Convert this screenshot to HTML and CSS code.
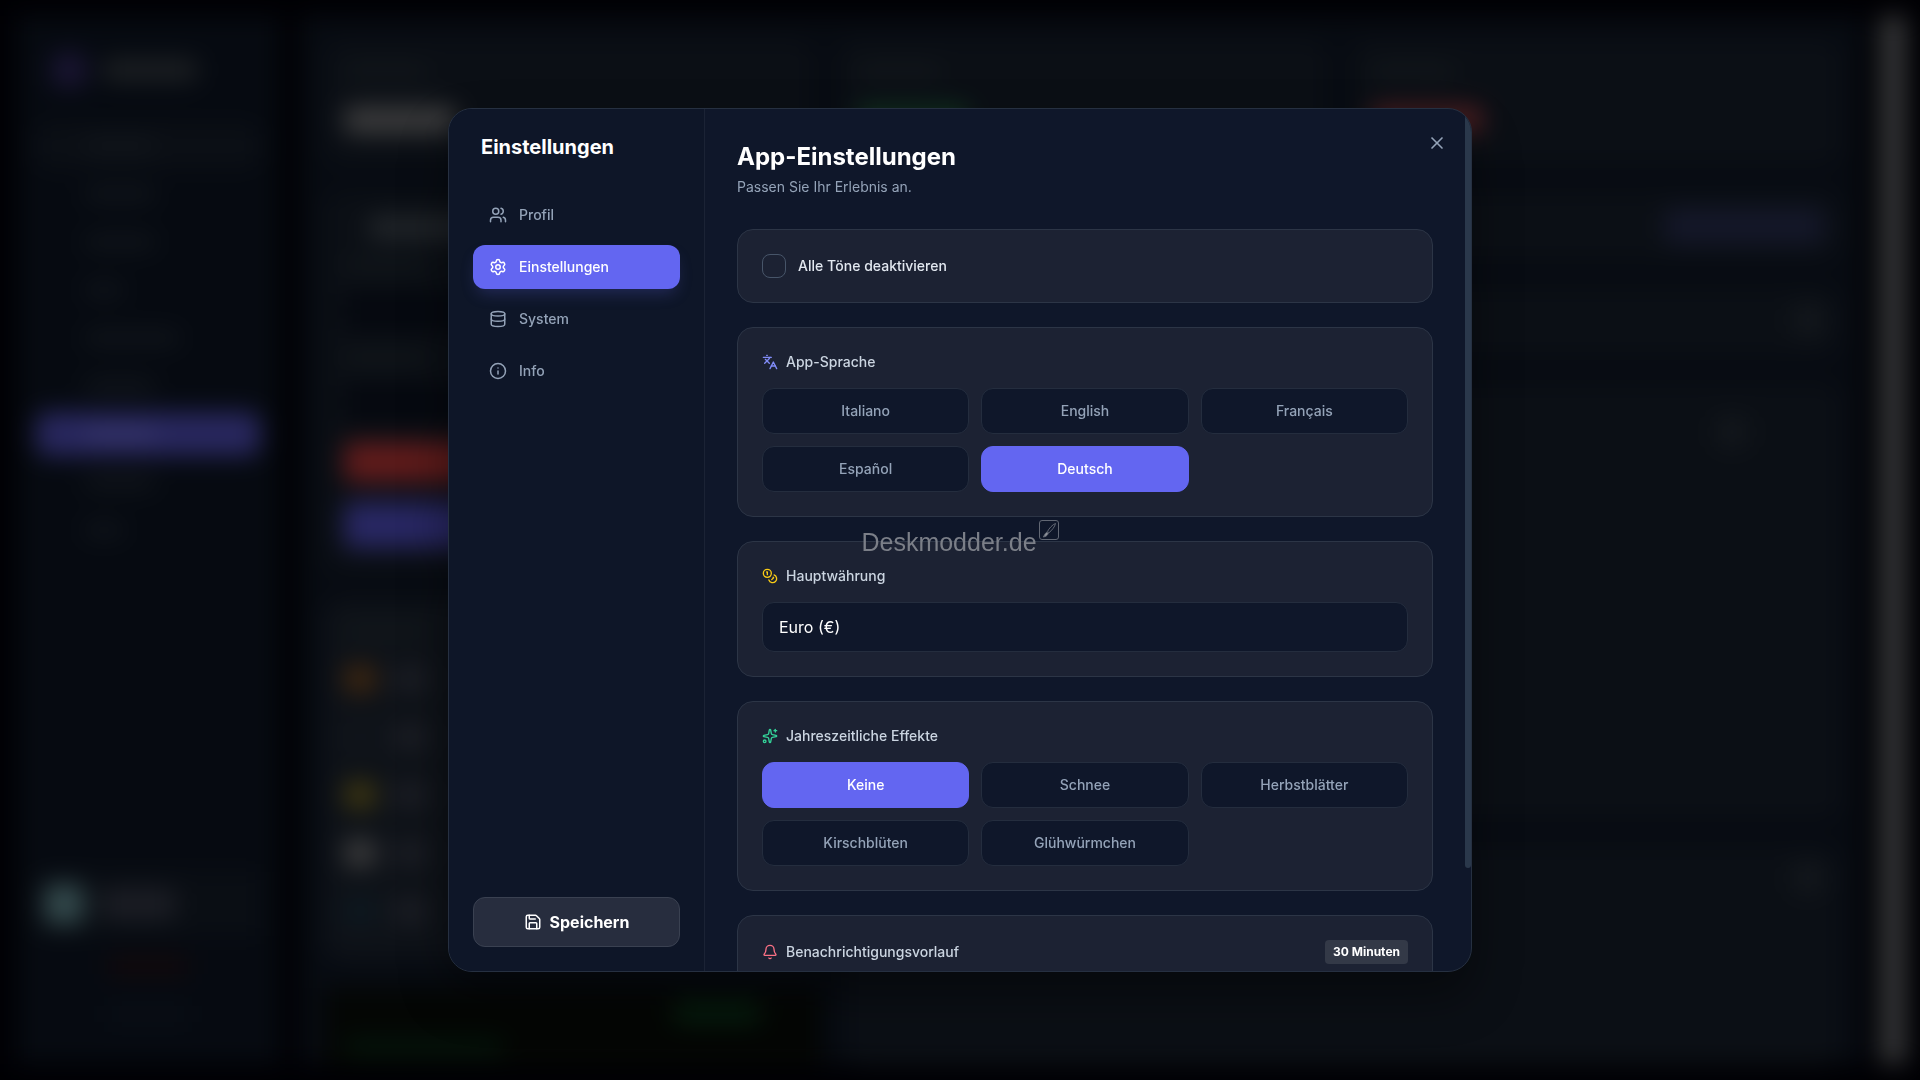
FILE: index.html
```html
<!DOCTYPE html>
<html lang="de">
<head>
    <meta charset="UTF-8">
    <meta name="viewport" content="width=device-width, initial-scale=1.0">
    <title>Einstellungen</title>
    <link rel="stylesheet" href="styles.css">
</head>
<body>
    <!-- Dashboard behind the dialog -->
    <div class="backdrop" aria-hidden="true">
        <div class="side">
            <div class="side-logo"><i class="logo-mark"></i><i class="logo-name"></i></div>
            <div class="side-item boxed"><i></i></div>
            <div class="side-item"><i></i></div>
            <div class="side-item"><i></i></div>
            <div class="side-item short"><i></i></div>
            <div class="side-item long"><i></i></div>
            <div class="side-item"><i></i></div>
            <div class="side-item active"><i></i></div>
            <div class="side-item"><i></i></div>
            <div class="side-item short"><i></i></div>
            <div class="side-user"><i class="avatar"></i><i class="user-name"></i></div>
            <div class="side-link red"></div>
            <div class="side-link"></div>
        </div>
        <div class="board">
            <div class="stats">
                <div class="panel"><i class="line"></i><i class="value"></i></div>
                <div class="panel"><i class="line"></i><i class="value green"></i></div>
                <div class="panel"><i class="line"></i><i class="value red"></i></div>
            </div>
            <div class="columns">
                <div class="column-left">
                    <div class="panel form">
                        <i class="form-title"></i>
                        <i class="line"></i>
                        <i class="field"></i>
                        <i class="line"></i>
                        <i class="field"></i>
                        <i class="action red"></i>
                        <i class="action"></i>
                    </div>
                    <div class="panel coins">
                        <i class="line"></i>
                        <div class="coin orange"><i></i><b></b></div>
                        <div class="coin"><i></i><b></b></div>
                        <div class="coin yellow"><i></i><b></b></div>
                        <div class="coin white"><i></i><b></b></div>
                        <div class="coin blue"><i></i><b></b></div>
                    </div>
                    <div class="terminal"><i></i><b></b></div>
                </div>
                <div class="column-right">
                    <div class="panel strip"><i class="pill"></i></div>
                    <div class="panel strip"><i class="dot"></i></div>
                    <div class="panel chart"><i class="dot"></i></div>
                    <div class="panel rest"><i class="dot"></i></div>
                </div>
            </div>
        </div>
        <div class="page-scroll"></div>
    </div>

    <main class="overlay">
        <div class="modal" role="dialog" aria-labelledby="dialog-title">
            <aside class="sidebar">
                <h2 class="sidebar-title" id="dialog-title">Einstellungen</h2>
                <nav class="menu">
                    <button class="menu-item" type="button">
                        <svg class="icon" viewBox="0 0 24 24"><path d="M16 21v-2a4 4 0 0 0-4-4H6a4 4 0 0 0-4 4v2"/><circle cx="9" cy="7" r="4"/><path d="M22 21v-2a4 4 0 0 0-3-3.87"/><path d="M16 3.13a4 4 0 0 1 0 7.75"/></svg>
                        Profil
                    </button>
                    <button class="menu-item active" type="button">
                        <svg class="icon" viewBox="0 0 24 24"><path d="M9.671 4.136a2.34 2.34 0 0 1 4.659 0 2.34 2.34 0 0 0 3.319 1.915 2.34 2.34 0 0 1 2.33 4.033 2.34 2.34 0 0 0 0 3.831 2.34 2.34 0 0 1-2.33 4.033 2.34 2.34 0 0 0-3.319 1.915 2.34 2.34 0 0 1-4.659 0 2.34 2.34 0 0 0-3.32-1.915 2.34 2.34 0 0 1-2.33-4.033 2.34 2.34 0 0 0 0-3.831A2.34 2.34 0 0 1 6.35 6.051a2.34 2.34 0 0 0 3.319-1.915"/><circle cx="12" cy="12" r="3"/></svg>
                        Einstellungen
                    </button>
                    <button class="menu-item" type="button">
                        <svg class="icon" viewBox="0 0 24 24"><ellipse cx="12" cy="5" rx="9" ry="3"/><path d="M3 5v14a9 3 0 0 0 18 0V5"/><path d="M3 12a9 3 0 0 0 18 0"/></svg>
                        System
                    </button>
                    <button class="menu-item" type="button">
                        <svg class="icon" viewBox="0 0 24 24"><circle cx="12" cy="12" r="10"/><path d="M12 16v-4"/><path d="M12 8h.01"/></svg>
                        Info
                    </button>
                </nav>
                <button class="save" type="button">
                    <svg class="icon" viewBox="0 0 24 24"><path d="M15.2 3a2 2 0 0 1 1.4.6l3.8 3.8a2 2 0 0 1 .6 1.4V19a2 2 0 0 1-2 2H5a2 2 0 0 1-2-2V5a2 2 0 0 1 2-2z"/><path d="M17 21v-7a1 1 0 0 0-1-1H8a1 1 0 0 0-1 1v7"/><path d="M7 3v4a1 1 0 0 0 1 1h7"/></svg>
                    Speichern
                </button>
            </aside>

            <div class="content">
                <header class="content-header">
                    <h1>App-Einstellungen</h1>
                    <p>Passen Sie Ihr Erlebnis an.</p>
                </header>

                <section class="card">
                    <label class="check">
                        <input type="checkbox">
                        Alle Töne deaktivieren
                    </label>
                </section>

                <section class="card">
                    <h3 class="card-title">
                        <svg class="icon small indigo" viewBox="0 0 24 24"><path d="m5 8 6 6"/><path d="m4 14 6-6 2-3"/><path d="M2 5h12"/><path d="M7 2h1"/><path d="m22 22-5-10-5 10"/><path d="M14 18h6"/></svg>
                        App-Sprache
                    </h3>
                    <div class="options">
                        <button class="option" type="button">Italiano</button>
                        <button class="option" type="button">English</button>
                        <button class="option" type="button">Français</button>
                        <button class="option" type="button">Español</button>
                        <button class="option selected" type="button">Deutsch</button>
                    </div>
                </section>

                <section class="card">
                    <label class="card-title" for="currency">
                        <svg class="icon small yellow" viewBox="0 0 24 24"><circle cx="8" cy="8" r="6"/><path d="M18.09 10.37A6 6 0 1 1 10.34 18"/><path d="M7 6h1v4"/><path d="m16.71 13.88.7.71-2.82 2.82"/></svg>
                        Hauptwährung
                    </label>
                    <select class="select" id="currency">
                        <option>Euro (€)</option>
                    </select>
                </section>

                <section class="card">
                    <h3 class="card-title">
                        <svg class="icon small green" viewBox="0 0 24 24"><path d="M11.017 2.814a1 1 0 0 1 1.966 0l1.051 5.558a2 2 0 0 0 1.594 1.594l5.558 1.051a1 1 0 0 1 0 1.966l-5.558 1.051a2 2 0 0 0-1.594 1.594l-1.051 5.558a1 1 0 0 1-1.966 0l-1.051-5.558a2 2 0 0 0-1.594-1.594l-5.558-1.051a1 1 0 0 1 0-1.966l5.558-1.051a2 2 0 0 0 1.594-1.594z"/><path d="M20 2v4"/><path d="M22 4h-4"/><circle cx="4" cy="20" r="2"/></svg>
                        Jahreszeitliche Effekte
                    </h3>
                    <div class="options">
                        <button class="option selected" type="button">Keine</button>
                        <button class="option" type="button">Schnee</button>
                        <button class="option" type="button">Herbstblätter</button>
                        <button class="option" type="button">Kirschblüten</button>
                        <button class="option" type="button">Glühwürmchen</button>
                    </div>
                </section>

                <section class="card">
                    <div class="card-row">
                        <label class="card-title" for="lead">
                            <svg class="icon small rose" viewBox="0 0 24 24"><path d="M10.268 21a2 2 0 0 0 3.464 0"/><path d="M3.262 15.326A1 1 0 0 0 4 17h16a1 1 0 0 0 .74-1.673C19.41 13.956 18 12.499 18 8A6 6 0 0 0 6 8c0 4.499-1.411 5.956-2.738 7.326"/></svg>
                            Benachrichtigungsvorlauf
                        </label>
                        <span class="badge">30 Minuten</span>
                    </div>
                    <input class="slider" id="lead" type="range" min="0" max="120" value="30">
                </section>
            </div>
            <div class="scrollbar" aria-hidden="true"><div class="scrollbar-thumb"></div></div>

            <button class="close" type="button" aria-label="Schließen">
                <svg class="icon" viewBox="0 0 24 24"><path d="M18 6 6 18"/><path d="m6 6 12 12"/></svg>
            </button>
        </div>
    </main>

    <div class="watermark">
        <span>Deskmodder.de</span>
        <svg viewBox="0 0 20 20"><rect x=".5" y=".5" width="19" height="19" rx="2.5"/><path d="M16.5 3.5c-3 1-6.500 5-8 8l1.500 1.200c2.500-2 6-6 6.500-9.200z"/><path class="bristle" d="M7.800 12.200l1.500 1.200c-.8 2-2.500 3.200-5 3.600 1-1.500 1.500-3.600 3.500-4.800z"/></svg>
    </div>
</body>
</html>
```

FILE: styles.css
```css
* {
    box-sizing: border-box;
}
body {
    margin: 0;
    height: 100vh;
    overflow: hidden;
    background: #000104;
    color: #fff;
    font-family: Inter, "Liberation Sans", sans-serif;
    font-size: 14px;
    line-height: 20px;
}
h1, h2, h3, p {
    margin: 0;
}
button, select, input {
    font: inherit;
    color: inherit;
    margin: 0;
}
button {
    cursor: pointer;
}

/* Dashboard behind the dialog */
.backdrop {
    position: fixed;
    inset: 0;
    display: flex;
    padding: 16px;
    filter: blur(12px);
}
.backdrop i, .backdrop b {
    display: block;
    border-radius: 8px;
}
.side {
    display: flex;
    flex-direction: column;
    width: 264px;
    padding: 32px 20px;
    background: #060a11;
}
.side-logo {
    display: flex;
    align-items: center;
    gap: 16px;
    height: 44px;
    margin: 0 0 32px 16px;
}
.logo-mark {
    width: 34px;
    height: 34px;
    background: #1a1533;
}
.logo-name {
    width: 96px;
    height: 22px;
    background: #1d2023;
}
.side-item {
    display: flex;
    align-items: center;
    height: 44px;
    margin-bottom: 4px;
    padding-left: 48px;
    border-radius: 12px;
}
.side-item i {
    width: 72px;
    height: 14px;
    background: #12161c;
}
.side-item.short i {
    width: 40px;
}
.side-item.long i {
    width: 96px;
}
.side-item.boxed {
    background: #0b0f15;
}
.side-item.active {
    background: #28275e;
}
.side-item.active i {
    background: #36356a;
}
.side-user {
    display: flex;
    align-items: center;
    gap: 16px;
    height: 64px;
    margin-top: auto;
    padding-left: 8px;
    background: #0a0e14;
}
.avatar {
    width: 40px;
    height: 40px;
    background: #33494c;
}
.user-name {
    width: 76px;
    height: 32px;
    background: #1b1d24;
}
.side-link {
    width: 80px;
    height: 20px;
    margin: 20px auto 8px;
    background: #090e15;
}
.side-link.red {
    background: #12090b;
}
.board {
    display: flex;
    flex: 1;
    flex-direction: column;
    gap: 28px;
    padding: 24px;
    margin-left: 20px;
    background: #070b12;
}
.stats {
    display: grid;
    grid-template-columns: repeat(3, 1fr);
    gap: 24px;
}
.panel {
    padding: 24px 20px;
    border-radius: 20px;
    background: #0b0f15;
}
.stats .panel {
    height: 124px;
}
.line {
    width: 84px;
    height: 14px;
    background: #12171b;
}
.value {
    width: 112px;
    height: 28px;
    margin-top: 28px;
    background: #3b3b3c;
}
.value.green {
    background: #10311f;
}
.value.red {
    background: #4a1d20;
}
.columns {
    display: grid;
    flex: 1;
    grid-template-columns: 1fr 2fr;
    gap: 24px;
}
.column-left, .column-right {
    display: flex;
    flex-direction: column;
    gap: 28px;
}
.form {
    display: flex;
    flex-direction: column;
    gap: 20px;
    height: 380px;
}
.form-title {
    width: 120px;
    height: 24px;
    margin-left: 24px;
    background: #22262a;
}
.field {
    height: 40px;
    background: #05080f;
}
.action {
    height: 48px;
    background: #282763;
}
.action.red {
    height: 42px;
    background: #601b1b;
}
.coins {
    display: flex;
    flex-direction: column;
    gap: 24px;
    height: 360px;
    background: #0e1218;
}
.coin {
    display: flex;
    align-items: center;
    gap: 16px;
    height: 34px;
}
.coin i {
    width: 32px;
    height: 28px;
    background: #10141b;
}
.coin b {
    width: 36px;
    height: 28px;
    background: #1b1d24;
}
.coin.orange i {
    background: #3d2610;
}
.coin.yellow i {
    background: #3c3511;
}
.coin.white i {
    background: #3b3b3c;
}
.coin.blue i {
    background: #0d1820;
}
.terminal {
    display: flex;
    flex: 1;
    flex-direction: column;
    gap: 16px;
    padding: 12px 20px;
    background: #040604;
}
.terminal i {
    align-self: flex-end;
    width: 88px;
    height: 24px;
    margin-right: 40px;
    background: #061c0d;
}
.terminal b {
    width: 160px;
    height: 14px;
    background: #05180c;
}
.column-right .panel {
    display: flex;
    justify-content: flex-end;
    padding: 16px;
}
.column-right .chart {
    padding: 32px 92px;
}
.strip {
    height: 68px;
}
.chart {
    flex: 1;
}
.rest {
    height: 220px;
}
.pill {
    width: 160px;
    height: 36px;
    background: #141729;
}
.dot {
    width: 32px;
    height: 32px;
    background: #13171c;
}
.page-scroll {
    width: 26px;
    margin: 0 -2px 0 16px;
    background: #353638;
}

/* Settings dialog */
.overlay {
    position: relative;
    display: flex;
    align-items: center;
    justify-content: center;
    height: 100vh;
    padding: 16px;
}
.modal {
    position: relative;
    display: flex;
    width: 100%;
    max-width: 1024px;
    height: 80vh;
    overflow: hidden;
    border: 1px solid #263041;
    border-radius: 24px;
    background: #0f172a;
    box-shadow: 0 24px 48px rgba(0, 0, 0, 0.4);
}
.icon {
    flex: none;
    width: 18px;
    height: 18px;
    fill: none;
    stroke: currentColor;
    stroke-width: 2;
    stroke-linecap: round;
    stroke-linejoin: round;
}
.icon.small {
    width: 16px;
    height: 16px;
}
.indigo {
    color: #818cf8;
}
.yellow {
    color: #facc15;
}
.green {
    color: #34d399;
}
.rose {
    color: #fb7185;
}
.sidebar {
    display: flex;
    flex: none;
    flex-direction: column;
    width: 256px;
    padding: 24px;
    border-right: 1px solid #1b2335;
    background: #0e1628;
}
.sidebar-title {
    padding: 0 8px;
    margin-bottom: 32px;
    font-size: 20px;
    font-weight: 700;
    line-height: 28px;
}
.menu {
    display: flex;
    flex: 1;
    flex-direction: column;
    gap: 8px;
}
.menu-item {
    display: flex;
    align-items: center;
    gap: 12px;
    padding: 12px 16px;
    border: 0;
    border-radius: 12px;
    background: none;
    color: #94a3b8;
    font-weight: 500;
}
.menu-item.active {
    background: #6366f1;
    color: #fff;
    box-shadow: 0 8px 16px -4px rgba(99, 102, 241, 0.25);
}
.save {
    display: flex;
    align-items: center;
    justify-content: center;
    gap: 8px;
    padding: 12px;
    border: 1px solid #3a4151;
    border-radius: 12px;
    background: #272d3e;
    font-size: 16px;
    font-weight: 700;
    line-height: 24px;
}
.content {
    display: flex;
    flex: 1;
    flex-direction: column;
    gap: 24px;
    padding: 32px;
    overflow-y: auto;
    scrollbar-width: none;
}
.scrollbar {
    flex: none;
    width: 6px;
}
.scrollbar-thumb {
    height: 88%;
    border-radius: 3px;
    background: #2a384b;
}
.content-header {
    margin-bottom: 8px;
    color: #94a3b8;
}
.content-header h1 {
    margin-bottom: 4px;
    color: #fff;
    font-size: 24px;
    font-weight: 700;
    line-height: 32px;
}
.card {
    flex: none;
    padding: 24px;
    border: 1px solid #2c3546;
    border-radius: 16px;
    background: #1c2233;
}
.card-title {
    display: flex;
    align-items: center;
    gap: 8px;
    margin-bottom: 16px;
    color: #cbd5e1;
    font-size: 14px;
    font-weight: 500;
}
.check {
    display: flex;
    align-items: center;
    gap: 12px;
    color: #e2e8f0;
    font-weight: 500;
}
.check input {
    appearance: none;
    width: 24px;
    height: 24px;
    border: 1px solid #475569;
    border-radius: 8px;
}
.check input:checked {
    background: #6366f1;
}
.options {
    display: grid;
    grid-template-columns: repeat(3, 1fr);
    gap: 12px;
}
.option {
    padding: 12px;
    border: 1px solid #242d3e;
    border-radius: 12px;
    background: #0f172a;
    color: #94a3b8;
    font-weight: 500;
}
.option.selected {
    border-color: #6366f1;
    background: #6366f1;
    color: #fff;
}
.select {
    display: block;
    width: 100%;
    padding: 12px 16px;
    appearance: none;
    border: 1px solid #242d3e;
    border-radius: 12px;
    background: #0f172a;
    font-size: 16px;
    line-height: 24px;
}
.card-row {
    display: flex;
    align-items: center;
    justify-content: space-between;
    margin-bottom: 16px;
}
.card-row .card-title {
    margin-bottom: 0;
}
.badge {
    padding: 4px 8px;
    border-radius: 4px;
    background: #333947;
    font-size: 12px;
    font-weight: 700;
    line-height: 16px;
}
.slider {
    display: block;
    width: 100%;
    height: 8px;
    margin: 16px 0 24px;
    accent-color: #6366f1;
}
.close {
    position: absolute;
    top: 16px;
    right: 16px;
    display: flex;
    padding: 8px;
    border: 0;
    background: none;
    color: #94a3b8;
}
.close .icon {
    width: 20px;
    height: 20px;
}

/* Site mark over the page */
.watermark {
    position: fixed;
    top: 520px;
    left: 0;
    right: 0;
    display: flex;
    justify-content: center;
    gap: 2px;
    color: #7b7f88;
    font-family: "Liberation Sans Narrow", "Liberation Sans", sans-serif;
    font-size: 25px;
    line-height: 44px;
    pointer-events: none;
}
.watermark svg {
    width: 20px;
    height: 20px;
    fill: none;
    stroke: #626874;
}
.watermark .bristle {
    fill: #8d9199;
}
```
